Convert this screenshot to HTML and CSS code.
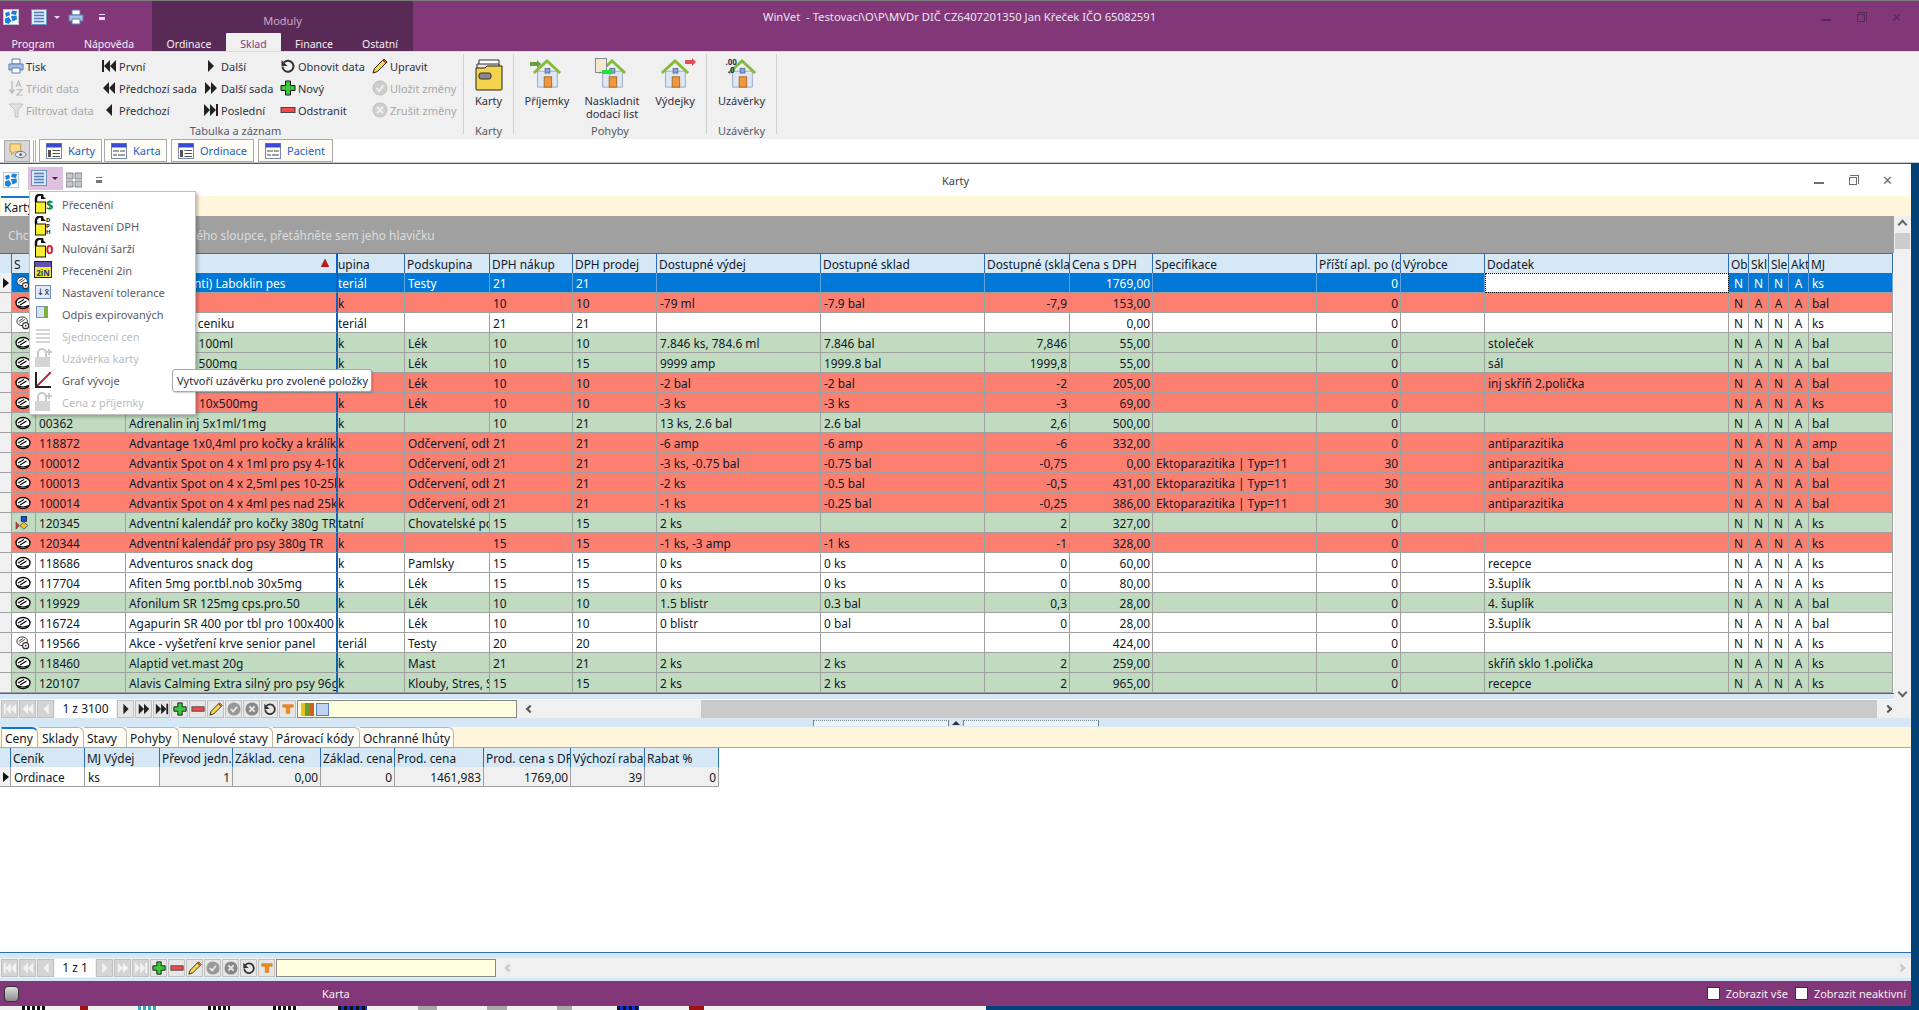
FILE: index.html
```html
<!DOCTYPE html>
<html>
<head>
    <meta charset="UTF-8">
    <title>WinVet</title>
    <link rel="stylesheet" href="styles.css">
</head>
<body>
<svg class="sprites" width="0" height="0">
    <defs>
        <symbol id="i-logo" viewBox="0 0 16 16"><rect x=".5" y=".5" width="15" height="15" fill="#fff" stroke="#b8c8d8"/><path d="M9 1.500l5 .5-1 4-5-1zM2 4l4-1.500 1 3.500-4 2zM8 7l5.500-.5.500 4-4.500 2zM2 9.500l4-1.500 2.500 4-3 3-3.500-1.500z" fill="#1f80d4"/></symbol>
        <symbol id="i-list" viewBox="0 0 16 16"><rect x=".5" y=".5" width="15" height="15" fill="#dfeaf8" stroke="#6f93c4"/><path d="M3 3.500h10M3 6.500h10M3 9.500h10M3 12.500h10" stroke="#4f7fc0" stroke-width="1.600"/></symbol>
        <symbol id="i-cards" viewBox="0 0 16 16"><path d="M0 1h7v6H0zM9 1h7v6H9zM0 9h7v6H0zM9 9h7v6H9z" fill="#c4c8cc" stroke="#707070" stroke-width=".8"/></symbol>
        <symbol id="i-print" viewBox="0 0 16 16"><path d="M4 1h8v5H4z" fill="#fff" stroke="#5a7fb0"/><path d="M1 6h14v6H1z" fill="#a8c0e4" stroke="#5a7fb0"/><path d="M4 10h8v5H4z" fill="#fff" stroke="#5a7fb0"/></symbol>
        <symbol id="i-sort" viewBox="0 0 16 16"><path d="M4 1v11M1.500 9.500L4 13l2.500-3.500" fill="none" stroke="#bcbcbc" stroke-width="1.400"/><path d="M8 7l2.500-6L13 7M9 5h3M8.500 9.500H14L9 15h5.500" fill="none" stroke="#bcbcbc" stroke-width="1.200"/></symbol>
        <symbol id="i-filter" viewBox="0 0 16 16"><path d="M1 2h14L10 8v7H7V8z" fill="#e2e2e2" stroke="#c0c0c0"/></symbol>
        <symbol id="i-first" viewBox="0 0 16 16"><path fill="currentColor" d="M1 2h2v12H1zM9 2v12L3 8zM15 2v12L9 8z"/></symbol>
        <symbol id="i-prevset" viewBox="0 0 16 16"><path fill="currentColor" d="M8 2v12L2 8zM14 2v12L8 8z"/></symbol>
        <symbol id="i-prev" viewBox="0 0 16 16"><path fill="currentColor" d="M11 2v12L5 8z"/></symbol>
        <symbol id="i-next" viewBox="0 0 16 16"><path fill="currentColor" d="M5 2v12l6-6z"/></symbol>
        <symbol id="i-nextset" viewBox="0 0 16 16"><path fill="currentColor" d="M2 2v12l6-6zM8 2v12l6-6z"/></symbol>
        <symbol id="i-last" viewBox="0 0 16 16"><path fill="currentColor" d="M1 2v12l6-6zM7 2v12l6-6zM13 2h2v12h-2z"/></symbol>
        <symbol id="i-refresh" viewBox="0 0 16 16"><path d="M4 4.500a5.500 5.500 0 1 1-1.500 4" fill="none" stroke="#333" stroke-width="2"/><path d="M1.500 2v6h6z" fill="#333"/></symbol>
        <symbol id="i-plus" viewBox="0 0 16 16"><path d="M5.500 1h5v4.500H15v5h-4.500V15h-5v-4.500H1v-5h4.500z" fill="#3cc83c" stroke="#111"/></symbol>
        <symbol id="i-minus" viewBox="0 0 16 16"><rect x="1" y="5.500" width="14" height="5" fill="#f4484c" stroke="#444"/></symbol>
        <symbol id="i-pencil" viewBox="0 0 16 16"><path d="M12 1l3 3-9.500 9.500L1 15l1.500-4.500z" fill="#f6d850" stroke="#222"/><path d="M11 2l3 3" stroke="#c03020" stroke-width="1.400"/></symbol>
        <symbol id="i-ok" viewBox="0 0 16 16"><circle cx="8" cy="8" r="7" fill="#cfcfcf" stroke="#bcbcbc"/><path d="M4.500 8l2.500 3 4.500-5.500" fill="none" stroke="#f0f0f0" stroke-width="1.800"/></symbol>
        <symbol id="i-no" viewBox="0 0 16 16"><circle cx="8" cy="8" r="7" fill="#cfcfcf" stroke="#bcbcbc"/><path d="M5 5l6 6M11 5l-6 6" stroke="#f0f0f0" stroke-width="2"/></symbol>
        <symbol id="i-ok2" viewBox="0 0 16 16"><circle cx="8" cy="8" r="7.500" fill="#989898"/><path d="M4.500 8l2.500 3 4.500-5.500" fill="none" stroke="#e8e8e8" stroke-width="2"/></symbol>
        <symbol id="i-no2" viewBox="0 0 16 16"><circle cx="8" cy="8" r="7.500" fill="#888"/><path d="M5 5l6 6M11 5l-6 6" stroke="#e8e8e8" stroke-width="2.200"/></symbol>
        <symbol id="i-funnel" viewBox="0 0 16 16"><path d="M2 3h12v3H10v7H6V6H2z" fill="#f08a1c" stroke="#c86a10" stroke-width=".6"/></symbol>
        <symbol id="i-folder" viewBox="0 0 28 32"><path d="M4 1h20v8H4z" fill="#fff" stroke="#333"/><path d="M2 5h22v5H2z" fill="#e8e8e8" stroke="#333"/><path d="M1 9h9l2-2h15v23a1 1 0 0 1-1 1H2a1 1 0 0 1-1-1z" fill="#f4d44e" stroke="#222"/><rect x="4" y="14" width="12" height="6" rx="2" fill="#8a8a8a" stroke="#333"/></symbol>
        <symbol id="i-house" viewBox="0 0 32 32"><path d="M6 13h21v17H6z" fill="#e0e7f4" stroke="#9aa8c8"/><path d="M2 15L16 2l14 13" fill="none" stroke="#86b83c" stroke-width="3"/><rect x="13" y="19" width="8" height="11" fill="#ee9a3c" stroke="#a8682a"/><rect x="14" y="10" width="5" height="5" fill="#8aa4d4" stroke="#5a70a0"/></symbol>
        <symbol id="i-pill" viewBox="0 0 16 14"><ellipse cx="8" cy="7" rx="7" ry="5.500" fill="#fff" stroke="#000" stroke-width="1.300"/><path d="M3 7l6-3.500M5 9l6.500-4M2.500 9.500q5.500 3 11 0" fill="none" stroke="#000" stroke-width="1.100"/></symbol>
        <symbol id="i-mat" viewBox="0 0 16 16"><ellipse cx="7" cy="6" rx="6" ry="5" fill="#fff" stroke="#222"/><path d="M3 6l5-3M4 8l6-4" stroke="#333"/><circle cx="11" cy="11" r="3.500" fill="#fff" stroke="#333" stroke-width="1.300"/><circle cx="11" cy="11" r="1" fill="#333"/></symbol>
        <symbol id="i-task" viewBox="0 0 16 16"><rect x="6" y="0" width="6" height="6" fill="#1f4fd8" stroke="#123"/><path d="M9 7l4.500 4L9 15l-4.500-4z" fill="#e8c820" stroke="#555"/><path d="M0 7v8l4-4z" fill="#e03030" stroke="#333" stroke-width=".6"/></symbol>
        <symbol id="i-lock" viewBox="0 0 20 20"><path d="M3 8V4a4 4 0 0 1 7-2" fill="none" stroke="#111" stroke-width="2.400"/><path d="M8 0v5h5z" fill="#111"/><rect x="2.500" y="8" width="10" height="11" fill="#f8ee30" stroke="#111"/></symbol>
        <symbol id="i-lockg" viewBox="0 0 20 20"><path d="M5 9V5a4 4 0 0 1 8 0v4" fill="none" stroke="#c8c8c8" stroke-width="2"/><rect x="2" y="9" width="15" height="10" fill="#d4d4d4"/><path d="M16 1v6M13 4h6" stroke="#c8c8c8" stroke-width="2"/></symbol>
        <symbol id="i-note" viewBox="0 0 20 18"><path d="M1 1h12v9H6l-3 3v-3H1z" fill="#fbd98a" stroke="#c09040"/><ellipse cx="13" cy="13" rx="6" ry="3.500" fill="#dfe6f0" stroke="#5a6a80"/><circle cx="13" cy="13" r="1.500" fill="#4a5a70"/></symbol>
        <symbol id="i-win" viewBox="0 0 16 16"><rect x=".5" y=".5" width="15" height="15" fill="#fff" stroke="#7a8aa8"/><rect x=".5" y=".5" width="15" height="4" fill="#3a4ad8"/><path d="M2 7h3v7H2zM6.500 7H14v1H6.500zM6.500 10H14v1H6.500zM6.500 13H14v1H6.500z" fill="#555"/></symbol>
        <symbol id="i-form" viewBox="0 0 16 16"><rect x=".5" y=".5" width="15" height="15" fill="#fff" stroke="#7a8aa8"/><rect x=".5" y=".5" width="15" height="4" fill="#3a4ad8"/><path d="M2 7h6v2H2zM9 7h5v2H9zM2 11h4v2H2zM7 11h7v2H7z" fill="#a0a0a0"/></symbol>
    </defs>
</svg>

<div class="appbar">
    <div class="appbar-left">
        <div class="qat">
            <svg class="ico logo"><use href="#i-logo"/></svg>
            <svg class="ico list"><use href="#i-list"/></svg>
            <span class="caret"></span>
            <svg class="ico print"><use href="#i-print"/></svg>
            <span class="more"></span>
        </div>
        <div class="rtabs">
            <span class="rtab w66">Program</span>
            <span class="rtab w86">Nápověda</span>
        </div>
    </div>
    <div class="moduly">
        <div class="moduly-name">Moduly</div>
        <div class="rtabs">
            <span class="rtab w74">Ordinace</span>
            <span class="rtab w55 active">Sklad</span>
            <span class="rtab w66">Finance</span>
            <span class="rtab w66">Ostatní</span>
        </div>
    </div>
    <div class="apptitle">
        <span>WinVet&nbsp; - Testovací\O\P\MVDr DIČ CZ6407201350 Jan Křeček IČO 65082591</span>
        <div class="winbtns">
            <span class="btn-min"></span>
            <span class="btn-max"></span>
            <span class="btn-close">✕</span>
        </div>
    </div>
</div>

<div class="ribbon">
    <div class="rgroup g-table">
        <div class="rgrid">
            <div class="ritem"><svg class="ico"><use href="#i-print"/></svg>Tisk</div>
            <div class="ritem"><svg class="ico"><use href="#i-first"/></svg>První</div>
            <div class="ritem"><svg class="ico"><use href="#i-next"/></svg>Další</div>
            <div class="ritem"><svg class="ico"><use href="#i-refresh"/></svg>Obnovit data</div>
            <div class="ritem"><svg class="ico"><use href="#i-pencil"/></svg>Upravit</div>
            <div class="ritem off"><svg class="ico"><use href="#i-sort"/></svg>Třídit data</div>
            <div class="ritem"><svg class="ico"><use href="#i-prevset"/></svg>Předchozí sada</div>
            <div class="ritem"><svg class="ico"><use href="#i-nextset"/></svg>Další sada</div>
            <div class="ritem"><svg class="ico"><use href="#i-plus"/></svg>Nový</div>
            <div class="ritem off"><svg class="ico"><use href="#i-ok"/></svg>Uložit změny</div>
            <div class="ritem off"><svg class="ico"><use href="#i-filter"/></svg>Filtrovat data</div>
            <div class="ritem"><svg class="ico"><use href="#i-prev"/></svg>Předchozí</div>
            <div class="ritem"><svg class="ico"><use href="#i-last"/></svg>Poslední</div>
            <div class="ritem"><svg class="ico"><use href="#i-minus"/></svg>Odstranit</div>
            <div class="ritem off"><svg class="ico"><use href="#i-no"/></svg>Zrušit změny</div>
        </div>
        <div class="rlabel">Tabulka a záznam</div>
    </div>
    <span class="rsep"></span>
    <div class="rgroup g-karty">
        <div class="rbig-row">
            <div class="rbig w100"><svg class="big folder"><use href="#i-folder"/></svg>Karty</div>
        </div>
        <div class="rlabel">Karty</div>
    </div>
    <span class="rsep"></span>
    <div class="rgroup g-pohyby">
        <div class="rbig-row">
            <div class="rbig w66"><span class="bigwrap"><svg class="big"><use href="#i-house"/></svg><i class="arrow green left"></i></span>Příjemky</div>
            <div class="rbig w64"><span class="bigwrap"><svg class="big"><use href="#i-house"/></svg><i class="doc"></i><i class="arrow lime left"></i></span>Naskladnit<br>dodací list</div>
            <div class="rbig w62"><span class="bigwrap"><svg class="big"><use href="#i-house"/></svg><i class="arrow red right"></i></span>Výdejky</div>
        </div>
        <div class="rlabel">Pohyby</div>
    </div>
    <span class="rsep"></span>
    <div class="rgroup g-uzav">
        <div class="rbig-row">
            <div class="rbig w100"><span class="bigwrap"><svg class="big"><use href="#i-house"/></svg><i class="zeros">.00<br>.0</i></span>Uzávěrky</div>
        </div>
        <div class="rlabel">Uzávěrky</div>
    </div>
    <span class="rsep"></span>
</div>

<div class="mdibar">
    <span class="mdi-note"><svg class="noteico"><use href="#i-note"/></svg></span>
    <span class="mdi-grip"></span>
    <span class="mdi w63"><svg class="ico"><use href="#i-win"/></svg>Karty</span>
    <span class="mdi w63b"><svg class="ico"><use href="#i-form"/></svg>Karta</span>
    <span class="mdi w83"><svg class="ico"><use href="#i-win"/></svg>Ordinace</span>
    <span class="mdi w75"><svg class="ico"><use href="#i-form"/></svg>Pacient</span>
</div>

<div class="window">
    <div class="winhead">
        <svg class="ico logo2"><use href="#i-logo"/></svg>
        <span class="hl"><svg class="ico"><use href="#i-list"/></svg><span class="caret dark"></span></span>
        <svg class="ico cards"><use href="#i-cards"/></svg>
        <span class="more dark"></span>
        <span class="wintitle">Karty</span>
        <div class="winbtns gray">
            <span class="btn-min"></span>
            <span class="btn-max"></span>
            <span class="btn-close">✕</span>
        </div>
    </div>
    <div class="yellow"><span class="ytab">Karty</span></div>

    <div class="gridwrap">
        <div class="gridcol">
            <div class="grouppanel">Chcete-li seskupovat podle některého sloupce, přetáhněte sem jeho hlavičku</div>
            <table class="grid main">
                <colgroup>
                    <col style="width:12px"><col style="width:24px"><col style="width:90px"><col style="width:212px"><col style="width:67px"><col style="width:85px"><col style="width:83px"><col style="width:84px"><col style="width:164px"><col style="width:164px"><col style="width:85px"><col style="width:83px"><col style="width:164px"><col style="width:84px"><col style="width:84px"><col style="width:244px"><col style="width:20px"><col style="width:20px"><col style="width:20px"><col style="width:20px"><col style="width:84px">
                </colgroup>
                <thead>
                <tr><th></th><th>S</th><th>Kód</th><th>Název<svg class="sortmark" viewBox="0 0 8 8"><path d="M4 0l4 8H0z" fill="#e01010" stroke="#333" stroke-width=".5"/></svg></th><th>upina</th><th>Podskupina</th><th>DPH nákup</th><th>DPH prodej</th><th>Dostupné výdej</th><th>Dostupné sklad</th><th>Dostupné (sklad)</th><th>Cena s DPH</th><th>Specifikace</th><th>Příští apl. po (dnech)</th><th>Výrobce</th><th>Dodatek</th><th>Ob</th><th>Skl</th><th>Sle</th><th>Akt</th><th>MJ</th></tr>
                </thead>
                <tbody>
                <tr class="sel"><td><i class="rowmark"></i></td><td><svg class="cellico"><use href="#i-mat"/></svg></td><td>110000</td><td>Vyšetření (anti) Laboklin pes</td><td>teriál</td><td>Testy</td><td>21</td><td>21</td><td></td><td></td><td></td><td>1769,00</td><td></td><td>0</td><td></td><td class="editing"></td><td>N</td><td>N</td><td>N</td><td>A</td><td>ks</td></tr>
                <tr class="red"><td></td><td><svg class="cellico"><use href="#i-pill"/></svg></td><td>100001</td><td>Acepromaz.</td><td>k</td><td></td><td>10</td><td>10</td><td>-79 ml</td><td>-7.9 bal</td><td>-7,9</td><td>153,00</td><td></td><td>0</td><td></td><td></td><td>N</td><td>A</td><td>A</td><td>A</td><td>bal</td></tr>
                <tr class="white"><td></td><td><svg class="cellico"><use href="#i-mat"/></svg></td><td>100002</td><td>Položka bez ceniku</td><td>teriál</td><td></td><td>21</td><td>21</td><td></td><td></td><td></td><td>0,00</td><td></td><td>0</td><td></td><td></td><td>N</td><td>N</td><td>N</td><td>A</td><td>ks</td></tr>
                <tr class="green"><td></td><td><svg class="cellico"><use href="#i-pill"/></svg></td><td>100003</td><td>Acidum asc. 100ml</td><td>k</td><td>Lék</td><td>10</td><td>10</td><td>7.846 ks, 784.6 ml</td><td>7.846 bal</td><td>7,846</td><td>55,00</td><td></td><td>0</td><td></td><td>stoleček</td><td>N</td><td>A</td><td>N</td><td>A</td><td>bal</td></tr>
                <tr class="green"><td></td><td><svg class="cellico"><use href="#i-pill"/></svg></td><td>100004</td><td>Acidum asc. 500mg</td><td>k</td><td>Lék</td><td>10</td><td>15</td><td>9999 amp</td><td>1999.8 bal</td><td>1999,8</td><td>55,00</td><td></td><td>0</td><td></td><td>sál</td><td>N</td><td>A</td><td>N</td><td>A</td><td>bal</td></tr>
                <tr class="red"><td></td><td><svg class="cellico"><use href="#i-pill"/></svg></td><td>100005</td><td>Aciclovir inj.</td><td>k</td><td>Lék</td><td>10</td><td>10</td><td>-2 bal</td><td>-2 bal</td><td>-2</td><td>205,00</td><td></td><td>0</td><td></td><td>inj skříň 2.polička</td><td>N</td><td>A</td><td>N</td><td>A</td><td>bal</td></tr>
                <tr class="red"><td></td><td><svg class="cellico"><use href="#i-pill"/></svg></td><td>100006</td><td>Acyclovir tbl 10x500mg</td><td>k</td><td>Lék</td><td>10</td><td>10</td><td>-3 ks</td><td>-3 ks</td><td>-3</td><td>69,00</td><td></td><td>0</td><td></td><td></td><td>N</td><td>A</td><td>N</td><td>A</td><td>ks</td></tr>
                <tr class="green"><td></td><td><svg class="cellico"><use href="#i-pill"/></svg></td><td>00362</td><td>Adrenalin inj 5x1ml/1mg</td><td>k</td><td></td><td>10</td><td>21</td><td>13 ks, 2.6 bal</td><td>2.6 bal</td><td>2,6</td><td>500,00</td><td></td><td>0</td><td></td><td></td><td>N</td><td>A</td><td>N</td><td>A</td><td>bal</td></tr>
                <tr class="red"><td></td><td><svg class="cellico"><use href="#i-pill"/></svg></td><td>118872</td><td>Advantage 1x0,4ml pro kočky a králíky</td><td>k</td><td>Odčervení, odblešení</td><td>21</td><td>21</td><td>-6 amp</td><td>-6 amp</td><td>-6</td><td>332,00</td><td></td><td>0</td><td></td><td>antiparazitika</td><td>N</td><td>A</td><td>N</td><td>A</td><td>amp</td></tr>
                <tr class="red"><td></td><td><svg class="cellico"><use href="#i-pill"/></svg></td><td>100012</td><td>Advantix Spot on 4 x 1ml pro psy 4-10kg</td><td>k</td><td>Odčervení, odblešení</td><td>21</td><td>21</td><td>-3 ks, -0.75 bal</td><td>-0.75 bal</td><td>-0,75</td><td>0,00</td><td>Ektoparazitika | Typ=11</td><td>30</td><td></td><td>antiparazitika</td><td>N</td><td>A</td><td>N</td><td>A</td><td>bal</td></tr>
                <tr class="red"><td></td><td><svg class="cellico"><use href="#i-pill"/></svg></td><td>100013</td><td>Advantix Spot on 4 x 2,5ml pes 10-25kg</td><td>k</td><td>Odčervení, odblešení</td><td>21</td><td>21</td><td>-2 ks</td><td>-0.5 bal</td><td>-0,5</td><td>431,00</td><td>Ektoparazitika | Typ=11</td><td>30</td><td></td><td>antiparazitika</td><td>N</td><td>A</td><td>N</td><td>A</td><td>bal</td></tr>
                <tr class="red"><td></td><td><svg class="cellico"><use href="#i-pill"/></svg></td><td>100014</td><td>Advantix Spot on 4 x 4ml pes nad 25kg</td><td>k</td><td>Odčervení, odblešení</td><td>21</td><td>21</td><td>-1 ks</td><td>-0.25 bal</td><td>-0,25</td><td>386,00</td><td>Ektoparazitika | Typ=11</td><td>30</td><td></td><td>antiparazitika</td><td>N</td><td>A</td><td>N</td><td>A</td><td>bal</td></tr>
                <tr class="green"><td></td><td><svg class="cellico"><use href="#i-task"/></svg></td><td>120345</td><td>Adventní kalendář pro kočky 380g TR</td><td>tatní</td><td>Chovatelské potřeby</td><td>15</td><td>15</td><td>2 ks</td><td></td><td>2</td><td>327,00</td><td></td><td>0</td><td></td><td></td><td>N</td><td>N</td><td>N</td><td>A</td><td>ks</td></tr>
                <tr class="red"><td></td><td><svg class="cellico"><use href="#i-pill"/></svg></td><td>120344</td><td>Adventní kalendář pro psy 380g TR</td><td>k</td><td></td><td>15</td><td>15</td><td>-1 ks, -3 amp</td><td>-1 ks</td><td>-1</td><td>328,00</td><td></td><td>0</td><td></td><td></td><td>N</td><td>A</td><td>N</td><td>A</td><td>ks</td></tr>
                <tr class="white"><td></td><td><svg class="cellico"><use href="#i-pill"/></svg></td><td>118686</td><td>Adventuros snack dog</td><td>k</td><td>Pamlsky</td><td>15</td><td>15</td><td>0 ks</td><td>0 ks</td><td>0</td><td>60,00</td><td></td><td>0</td><td></td><td>recepce</td><td>N</td><td>A</td><td>N</td><td>A</td><td>ks</td></tr>
                <tr class="white"><td></td><td><svg class="cellico"><use href="#i-pill"/></svg></td><td>117704</td><td>Afiten 5mg por.tbl.nob 30x5mg</td><td>k</td><td>Lék</td><td>15</td><td>15</td><td>0 ks</td><td>0 ks</td><td>0</td><td>80,00</td><td></td><td>0</td><td></td><td>3.šuplík</td><td>N</td><td>A</td><td>N</td><td>A</td><td>ks</td></tr>
                <tr class="green"><td></td><td><svg class="cellico"><use href="#i-pill"/></svg></td><td>119929</td><td>Afonilum SR 125mg cps.pro.50</td><td>k</td><td>Lék</td><td>10</td><td>10</td><td>1.5 blistr</td><td>0.3 bal</td><td>0,3</td><td>28,00</td><td></td><td>0</td><td></td><td>4. šuplík</td><td>N</td><td>A</td><td>N</td><td>A</td><td>bal</td></tr>
                <tr class="white"><td></td><td><svg class="cellico"><use href="#i-pill"/></svg></td><td>116724</td><td>Agapurin SR 400 por tbl pro 100x400</td><td>k</td><td>Lék</td><td>10</td><td>10</td><td>0 blistr</td><td>0 bal</td><td>0</td><td>28,00</td><td></td><td>0</td><td></td><td>3.šuplík</td><td>N</td><td>A</td><td>N</td><td>A</td><td>bal</td></tr>
                <tr class="white"><td></td><td><svg class="cellico"><use href="#i-mat"/></svg></td><td>119566</td><td>Akce - vyšetření krve senior panel</td><td>teriál</td><td>Testy</td><td>20</td><td>20</td><td></td><td></td><td></td><td>424,00</td><td></td><td>0</td><td></td><td></td><td>N</td><td>N</td><td>N</td><td>A</td><td>ks</td></tr>
                <tr class="green"><td></td><td><svg class="cellico"><use href="#i-pill"/></svg></td><td>118460</td><td>Alaptid vet.mast 20g</td><td>k</td><td>Mast</td><td>21</td><td>21</td><td>2 ks</td><td>2 ks</td><td>2</td><td>259,00</td><td></td><td>0</td><td></td><td>skříň sklo 1.polička</td><td>N</td><td>A</td><td>N</td><td>A</td><td>ks</td></tr>
                <tr class="green"><td></td><td><svg class="cellico"><use href="#i-pill"/></svg></td><td>120107</td><td>Alavis Calming Extra silný pro psy 96g</td><td>k</td><td>Klouby, Stres, Srdce</td><td>15</td><td>15</td><td>2 ks</td><td>2 ks</td><td>2</td><td>965,00</td><td></td><td>0</td><td></td><td>recepce</td><td>N</td><td>A</td><td>N</td><td>A</td><td>ks</td></tr>
                </tbody>
            </table>
            <div class="blueband"></div>
        </div>
        <div class="vscroll">
            <span class="chev up"></span>
            <span class="vthumb"></span>
            <span class="chev down"></span>
        </div>
    </div>

    <div class="navrow">
        <span class="nb off"><svg class="ico"><use href="#i-first"/></svg></span>
        <span class="nb off"><svg class="ico"><use href="#i-prevset"/></svg></span>
        <span class="nb off"><svg class="ico"><use href="#i-prev"/></svg></span>
        <span class="navlabel w61">1 z 3100</span>
        <span class="nb"><svg class="ico"><use href="#i-next"/></svg></span>
        <span class="nb"><svg class="ico"><use href="#i-nextset"/></svg></span>
        <span class="nb"><svg class="ico"><use href="#i-last"/></svg></span>
        <span class="nb"><svg class="ico"><use href="#i-plus"/></svg></span>
        <span class="nb"><svg class="ico"><use href="#i-minus"/></svg></span>
        <span class="nb"><svg class="ico"><use href="#i-pencil"/></svg></span>
        <span class="nb"><svg class="ico"><use href="#i-ok2"/></svg></span>
        <span class="nb"><svg class="ico"><use href="#i-no2"/></svg></span>
        <span class="nb"><svg class="ico"><use href="#i-refresh"/></svg></span>
        <span class="nb"><svg class="ico"><use href="#i-funnel"/></svg></span>
        <span class="filterbox w220"><i class="fb-chart"></i><i class="fb-table"></i></span>
        <span class="hchev left"></span>
        <span class="hthumb"></span>
        <span class="hchev right"></span>
    </div>

    <div class="splitter">
        <span class="dots"></span><span class="splitcaret"></span><span class="dots"></span>
    </div>

    <div class="subtabs">
        <span class="subtab active w36">Ceny</span>
        <span class="subtab w45">Sklady</span>
        <span class="subtab w43">Stavy</span>
        <span class="subtab w51">Pohyby</span>
        <span class="subtab w94">Nenulové stavy</span>
        <span class="subtab w87">Párovací kódy</span>
        <span class="subtab w94">Ochranné lhůty</span>
    </div>

    <div class="detail">
        <table class="grid sub">
            <colgroup>
                <col style="width:11px"><col style="width:74px"><col style="width:75px"><col style="width:73px"><col style="width:88px"><col style="width:74px"><col style="width:89px"><col style="width:87px"><col style="width:74px"><col style="width:74px">
            </colgroup>
            <thead>
            <tr><th></th><th>Ceník</th><th>MJ Výdej</th><th>Převod jedn.</th><th>Základ. cena</th><th>Základ. cena</th><th>Prod. cena</th><th>Prod. cena s DPH</th><th>Výchozí rabat</th><th>Rabat %</th></tr>
            </thead>
            <tbody>
            <tr><td><i class="rowmark"></i></td><td>Ordinace</td><td>ks</td><td>1</td><td>0,00</td><td>0</td><td>1461,983</td><td>1769,00</td><td>39</td><td>0</td></tr>
            </tbody>
        </table>
    </div>

    <div class="blueband2"></div>
    <div class="navrow second">
        <span class="nb off"><svg class="ico"><use href="#i-first"/></svg></span>
        <span class="nb off"><svg class="ico"><use href="#i-prevset"/></svg></span>
        <span class="nb off"><svg class="ico"><use href="#i-prev"/></svg></span>
        <span class="navlabel w40">1 z 1</span>
        <span class="nb off"><svg class="ico"><use href="#i-next"/></svg></span>
        <span class="nb off"><svg class="ico"><use href="#i-nextset"/></svg></span>
        <span class="nb off"><svg class="ico"><use href="#i-last"/></svg></span>
        <span class="nb"><svg class="ico"><use href="#i-plus"/></svg></span>
        <span class="nb"><svg class="ico"><use href="#i-minus"/></svg></span>
        <span class="nb"><svg class="ico"><use href="#i-pencil"/></svg></span>
        <span class="nb"><svg class="ico"><use href="#i-ok2"/></svg></span>
        <span class="nb"><svg class="ico"><use href="#i-no2"/></svg></span>
        <span class="nb"><svg class="ico"><use href="#i-refresh"/></svg></span>
        <span class="nb"><svg class="ico"><use href="#i-funnel"/></svg></span>
        <span class="filterbox w220"></span>
        <span class="hchev left faint"></span>
        <span class="hspace"></span>
        <span class="hchev right faint"></span>
    </div>
    <div class="blueband3"></div>

    <div class="statusbar">
        <span class="status-btn"></span>
        <span class="status-title">Karta</span>
        <label class="cb"><i></i>Zobrazit vše</label>
        <label class="cb"><i></i>Zobrazit neaktivní</label>
    </div>

    <div class="menu">
        <div class="mi"><span class="mi-ico"><svg><use href="#i-lock"/></svg><b class="tag green-t">$</b></span>Přecenění</div>
        <div class="mi"><span class="mi-ico"><svg><use href="#i-lock"/></svg><b class="tag dph">D<br>P<br>H</b></span>Nastavení DPH</div>
        <div class="mi"><span class="mi-ico"><svg><use href="#i-lock"/></svg><b class="tag red-t">0</b></span>Nulování šarží</div>
        <div class="mi"><span class="mi-ico"><i class="mi-2in">2iN</i></span>Přecenění 2in</div>
        <div class="mi"><span class="mi-ico"><i class="mi-tol">↓x̄</i></span>Nastavení tolerance</div>
        <div class="mi"><span class="mi-ico"><i class="mi-exp"></i></span>Odpis expirovaných</div>
        <div class="mi off"><span class="mi-ico"><i class="mi-merge"></i></span>Sjednocení cen</div>
        <div class="mi off"><span class="mi-ico"><svg><use href="#i-lockg"/></svg></span>Uzávěrka karty</div>
        <div class="mi"><span class="mi-ico"><i class="mi-chart"></i></span>Graf vývoje</div>
        <div class="mi off"><span class="mi-ico"><svg><use href="#i-lockg"/></svg></span>Cena z příjemky</div>
    </div>
    <div class="tooltip">Vytvoří uzávěrku pro zvolené položky</div>
</div>

<div class="deskstrip">
    <i style="width:23px;margin-left:22px"></i><i class="rd" style="width:8px;margin-left:35px"></i><i class="cy" style="width:20px;margin-left:50px"></i><i style="width:22px;margin-left:50px"></i><i style="width:24px;margin-left:43px"></i><i class="bl" style="width:29px;margin-left:41px"></i><i class="gy" style="width:19px;margin-left:51px"></i><i class="gy" style="width:20px;margin-left:50px"></i><i class="gy" style="width:15px;margin-left:50px"></i><i class="bl" style="width:22px;margin-left:45px"></i><i class="rd" style="width:15px;margin-left:50px"></i>
</div>
</body>
</html>
```

FILE: styles.css
```css
* {
    margin: 0;
    padding: 0;
    box-sizing: border-box;
}

html, body {
    width: 1919px;
    height: 1010px;
    overflow: hidden;
}

body {
    position: relative;
    background-color: #024276;
    font-family: "Noto Sans", "DejaVu Sans", sans-serif;
    font-size: 12px;
    color: #101828;
}

.sprites {
    position: absolute;
}

.ico {
    display: block;
    width: 16px;
    height: 16px;
    flex: none;
}

/* horni lista */
.appbar {
    display: flex;
    height: 51px;
    border-top: 1px solid #7c7c7c;
    background-color: #823878;
    color: #fff;
}

.appbar-left {
    display: flex;
    flex-direction: column;
    width: 152px;
}

.qat {
    display: flex;
    align-items: center;
    height: 32px;
    padding-left: 3px;
}

.qat .list {
    margin-left: 12px;
}

.qat .print {
    margin-left: 8px;
}

.caret {
    width: 0;
    height: 0;
    margin-left: 7px;
    border-top: 3px solid #e8e0f0;
    border-left: 3px solid transparent;
    border-right: 3px solid transparent;
}

.caret.dark {
    margin-left: 5px;
    border-top-color: #333;
}

.more {
    width: 6px;
    height: 6px;
    margin-left: 15px;
    border-top: 1px solid #e8e0f0;
    border-bottom: 3px solid #e8e0f0;
}

.more.dark {
    margin-left: 14px;
    border-color: #777;
}

.rtabs {
    display: flex;
    height: 18px;
}

.rtab {
    font-size: 10.500px;
    line-height: 23px;
    text-align: center;
    color: #f4eef4;
}

.rtab.active {
    background-color: #f0f0f0;
    color: #823878;
    border-radius: 1px 1px 0 0;
}

.w55 { width: 55px; }
.w66 { width: 66px; }
.w74 { width: 74px; }
.w86 { width: 86px; }

.moduly {
    display: flex;
    flex-direction: column;
    width: 261px;
    background-color: #5a2a56;
}

.moduly-name {
    height: 32px;
    padding-top: 11px;
    font-size: 11px;
    text-align: center;
    line-height: 18px;
    color: #c8a8cc;
}

.apptitle {
    display: flex;
    flex: 1;
    padding: 7px 0 0 350px;
    color: #ece4f0;
    font-size: 11.250px;
    line-height: 18px;
}

.winbtns {
    display: flex;
    align-items: center;
    height: 18px;
    margin-left: auto;
    margin-right: 17px;
    color: #5a2a56;
}

.btn-min {
    width: 10px;
    height: 2px;
    margin-top: 5px;
    background-color: currentColor;
}

.btn-max {
    position: relative;
    width: 8px;
    height: 8px;
    margin: 2px 0 0 26px;
    border: 1px solid currentColor;
}

.btn-max::before {
    content: "";
    position: absolute;
    top: -3px;
    right: -3px;
    width: 8px;
    height: 8px;
    border-top: 1px solid currentColor;
    border-right: 1px solid currentColor;
}

.btn-close {
    margin-left: 26px;
    font-size: 13px;
    font-weight: bold;
    line-height: 14px;
}

/* ribbon */
.ribbon {
    display: flex;
    height: 88px;
    border-top: 1px solid #e0d8e0;
    background-color: #f0f0f0;
    color: #303040;
    font-size: 11px;
}

.rgroup {
    display: flex;
    flex-direction: column;
    flex: none;
}

.g-table { width: 463px; padding: 3px 0 0 8px; }
.g-karty { width: 49px; }
.g-pohyby { width: 192px; }
.g-uzav { width: 69px; }

.rgrid {
    display: grid;
    grid-template-columns: 93px 102px 77px 92px 86px;
    grid-auto-rows: 22px;
    height: 67px;
}

.ritem {
    display: flex;
    align-items: center;
    gap: 2px;
    white-space: nowrap;
}

.ritem .ico {
    color: #222;
}

.ritem.off {
    color: #a8a8a8;
}

.rlabel {
    height: 17px;
    text-align: center;
    line-height: 18px;
    color: #5a5a66;
}

.rsep {
    flex: none;
    width: 1px;
    height: 80px;
    margin-top: 2px;
    background-color: #d0d0d0;
}

.rbig-row {
    display: flex;
    height: 70px;
    padding-top: 7px;
}

.rbig {
    display: flex;
    flex-direction: column;
    align-items: center;
    text-align: center;
    line-height: 13px;
}

.w100 { width: 100%; }
.w62 { width: 62px; }
.w64 { width: 64px; }

.big {
    display: block;
    width: 30px;
    height: 30px;
    margin-bottom: 5px;
}

.big.folder {
    width: 28px;
    height: 32px;
    margin: 0 0 3px;
}

.bigwrap {
    position: relative;
    display: block;
}

.arrow {
    position: absolute;
    top: 3px;
    width: 7px;
    height: 4px;
}

.arrow::after {
    content: "";
    position: absolute;
    top: -2px;
    right: -4px;
    border-left: 4px solid currentColor;
    border-top: 4px solid transparent;
    border-bottom: 4px solid transparent;
}

.arrow.green { background-color: #6c9c3c; color: #6c9c3c; left: -2px; }
.arrow.lime { background-color: #20e040; color: #20e040; left: 5px; top: 11px; }
.arrow.red { background-color: #e05050; color: #e05050; right: -2px; top: 1px; }

.doc {
    position: absolute;
    left: -2px;
    top: -1px;
    width: 12px;
    height: 15px;
    border: 1px solid #889;
    background-color: #f4e8d0;
}

.zeros {
    position: absolute;
    left: -1px;
    top: -1px;
    font-style: normal;
    font-weight: bold;
    font-size: 8px;
    line-height: 8px;
    color: #1a3060;
}

/* radek oken */
.mdibar {
    display: flex;
    align-items: center;
    height: 24px;
    padding-left: 4px;
    border-bottom: 1px solid #c8c8c8;
    background-color: #fff;
}

.mdi-note {
    width: 26px;
    height: 22px;
    border: 1px solid #aaa;
    background-color: #d8d8d8;
    padding: 2px 0 0 4px;
}

.noteico {
    display: block;
    width: 18px;
    height: 16px;
}

.mdi-grip {
    width: 3px;
    height: 22px;
    margin: 0 3px;
    border-left: 1px solid #b0b0b0;
    border-right: 1px solid #b0b0b0;
}

.mdi {
    display: flex;
    align-items: center;
    gap: 6px;
    height: 23px;
    margin-right: 4px;
    padding-left: 6px;
    border: 1px solid #aaa;
    background-color: #fffdf6;
    color: #2060c8;
    font-size: 11px;
}

.w63 { width: 63px; margin-right: 2px; }
.w63b { width: 63px; }
.w83 { width: 83px; }
.w75 { width: 75px; }

/* okno */
.window {
    position: relative;
    width: 1911px;
    border-top: 1px solid #823878;
    background-color: #fff;
}

.winhead {
    position: relative;
    display: flex;
    align-items: center;
    height: 32px;
    padding-left: 3px;
}

.logo2 {
    margin-right: 9px;
}

.hl {
    display: flex;
    align-items: center;
    width: 35px;
    height: 23px;
    margin-top: -4px;
    padding-left: 3px;
    background-color: #e0c0e0;
}

.cards {
    margin-left: 3px;
}

.wintitle {
    position: absolute;
    left: 942px;
    color: #444;
    font-size: 11px;
}

.winbtns.gray {
    height: 16px;
    margin-right: 18px;
    color: #6e6e6e;
}

.winbtns.gray .btn-max,
.winbtns.gray .btn-close {
    margin-left: 25px;
}

.yellow {
    height: 20px;
    background-color: #fff6dc;
}

.ytab {
    display: inline-block;
    height: 20px;
    margin-left: 1px;
    padding: 2px 2px 0 3px;
    border-top: 2px solid #0a78d8;
    border-right: 1px solid #aaa;
    background-color: #fffdf6;
    line-height: 15px;
}

.gridwrap {
    display: flex;
}

.gridcol {
    width: 1894px;
}

.grouppanel {
    height: 37px;
    padding-left: 8px;
    background-color: #a0a0a0;
    color: #dcdcdc;
    font-size: 11.900px;
    line-height: 38px;
    white-space: nowrap;
}

.grid {
    table-layout: fixed;
    border-collapse: separate;
    border-spacing: 0;
    font-size: 11.900px;
}

.grid.main {
    width: 1893px;
}

.grid.sub {
    width: 719px;
}

.grid th {
    height: 20px;
    padding: 0 2px;
    border-top: 1px solid #2f6db5;
    border-right: 1px solid #2f6db5;
    background-color: #d6e8f5;
    font-weight: normal;
    text-align: left;
    line-height: 18px;
    overflow: hidden;
    white-space: nowrap;
}

.grid td {
    height: 20px;
    padding: 1px 3px 0;
    border-top: 0;
    border-right: 1px solid #a0a0a0;
    border-bottom: 1px solid #a0a0a0;
    line-height: 18px;
    overflow: hidden;
    white-space: nowrap;
}

.grid.main td:nth-child(1) {
    padding-left: 0;
    padding-right: 0;
    background-color: #f0f0f0;
}

.grid.main td:nth-child(2) {
    padding-right: 0;
}

.grid.main th:nth-child(4),
.grid.main td:nth-child(4) {
    border-right: 2px solid #1060c0;
}

.grid.main th:nth-child(4) {
    position: relative;
}

.sortmark {
    position: absolute;
    right: 7px;
    top: 5px;
    width: 8px;
    height: 8px;
}

.grid.main td:nth-child(5) {
    padding-left: 0;
}

.grid.main th:nth-child(5) {
    padding-left: 0;
}

.grid.main td:nth-child(11),
.grid.main td:nth-child(12),
.grid.main td:nth-child(14) {
    padding-left: 0;
    padding-right: 2px;
    text-align: right;
}

.grid.main td:nth-child(n+17):nth-child(-n+20) {
    padding-left: 0;
    padding-right: 0;
    text-align: center;
}

.grid.main th:nth-child(n+17):nth-child(-n+20) {
    padding: 0 0 0 2px;
}

.cellico {
    display: block;
    width: 16px;
    height: 14px;
}

.red td { background-color: #fd7f70; }
.green td { background-color: #c0dbc0; }
.white td { background-color: #fff; }

.sel td {
    background-color: #0078d7;
    color: #fff;
    border-right-color: #6aa0d8;
}

.sel td.editing {
    background-color: #fff;
    outline: 1px dotted #000;
    outline-offset: -1px;
}

.rowmark {
    display: block;
    width: 0;
    height: 0;
    margin: 0 0 0 3px;
    border-left: 6px solid #111;
    border-top: 5px solid transparent;
    border-bottom: 5px solid transparent;
}

.blueband {
    height: 7px;
    border-top: 1px solid #2f6db5;
    border-bottom: 1px solid #fff;
    background-color: #d6e8f5;
}

.vscroll {
    display: flex;
    flex-direction: column;
    align-items: center;
    width: 17px;
    padding-top: 5px;
    background-color: #f0f0f0;
}

.chev {
    width: 7px;
    height: 7px;
    border-top: 2px solid #666;
    border-left: 2px solid #666;
    transform: rotate(45deg);
}

.chev.down {
    margin-top: auto;
    margin-bottom: 4px;
    transform: rotate(225deg);
}

.vthumb {
    width: 15px;
    height: 16px;
    margin-top: 5px;
    background-color: #cdcdcd;
}

/* navigator */
.navrow {
    display: flex;
    align-items: center;
    gap: 1px;
    height: 18px;
    padding-left: 1px;
    background-color: #f0f0f0;
}

.navrow.second {
    height: 20px;
}

.nb {
    display: flex;
    align-items: center;
    justify-content: center;
    width: 17px;
    height: 18px;
    border: 1px solid #c0c0c0;
    background-color: #e6e6e6;
    color: #222;
}

.nb .ico {
    width: 14px;
    height: 14px;
}

.nb.off {
    background-color: #d4d4d4;
    color: #f4f4f4;
}

.navlabel {
    height: 18px;
    background-color: #fff;
    text-align: center;
    line-height: 18px;
}

.w61 { width: 61px; }
.w40 { width: 40px; }

.filterbox {
    display: flex;
    align-items: center;
    gap: 2px;
    height: 18px;
    padding-left: 3px;
    border: 1px solid #888;
    background-color: #ffffe0;
}

.w220 { width: 220px; }

.fb-chart,
.fb-table {
    display: block;
    width: 13px;
    height: 13px;
}

.fb-chart {
    background: linear-gradient(90deg, #e8c020 33%, #60a030 33% 66%, #d06020 66%);
}

.fb-table {
    background-color: #c0d4f0;
    border: 1px solid #5080c8;
}

.hchev {
    flex: none;
    width: 6px;
    height: 6px;
    border-top: 2px solid #555;
    border-left: 2px solid #555;
}

.hchev.left {
    margin: 0 0 0 9px;
    transform: rotate(-45deg);
}

.hchev.right {
    transform: rotate(135deg);
}

.hchev.faint {
    border-color: #c4c4c4;
}

.hthumb {
    width: 1176px;
    height: 18px;
    margin-left: 167px;
    background-color: #cacaca;
}

.hthumb + .hchev {
    margin-left: 7px;
}

.hspace {
    flex: 1;
}

.hchev.right.faint {
    margin-right: 7px;
}

.splitter {
    display: flex;
    align-items: center;
    justify-content: center;
    gap: 3px;
    height: 9px;
    background-color: #d6e8f5;
}

.dots {
    width: 136px;
    height: 6px;
    margin-top: 1px;
    border: 1px solid #708498;
    border-bottom: 0;
    border-top-style: dotted;
    background-color: #eef4fa;
}

.splitcaret {
    width: 0;
    height: 0;
    border-bottom: 4px solid #333;
    border-left: 4px solid transparent;
    border-right: 4px solid transparent;
}

.subtabs {
    display: flex;
    align-items: flex-end;
    height: 21px;
    padding-left: 1px;
    border-bottom: 1px solid #a8a8a0;
    background-color: #fff6dc;
}

.subtab {
    height: 20px;
    padding-left: 3px;
    border: 1px solid #b8b8b0;
    border-bottom: 0;
    border-left: 0;
    border-top-right-radius: 6px;
    background-color: #fffdf6;
    line-height: 21px;
    white-space: nowrap;
}

.subtab.active {
    border-top: 2px solid #0a78d8;
    border-left: 1px solid #b8b8b0;
    line-height: 20px;
}

.w36 { width: 37px; margin-right: 1px; }
.w45 { width: 45px; }
.w43 { width: 43px; }
.w51 { width: 52px; }
.w94 { width: 94px; }
.w87 { width: 87px; }

.detail {
    height: 205px;
    border-bottom: 1px solid #2f6db5;
}

.grid.sub th {
    height: 19px;
    border-top: 0;
}

.grid.sub td:nth-child(n+4) {
    padding-left: 0;
    padding-right: 2px;
    text-align: right;
    background-color: #f0f0f0;
}

.grid.sub td:nth-child(1) {
    padding-left: 0;
    padding-right: 0;
    background-color: #f0f0f0;
}

.blueband2 {
    height: 5px;
    background-color: #d6e8f5;
}

.blueband3 {
    height: 3px;
    background-color: #d6e8f5;
}

/* stavovy radek */
.statusbar {
    display: flex;
    align-items: center;
    height: 25px;
    padding-left: 4px;
    background-color: #823878;
    color: #f4eef4;
    font-size: 11px;
}

.status-btn {
    width: 15px;
    height: 16px;
    border: 1px solid #333;
    border-radius: 4px;
    background: linear-gradient(#e0e0e0, #8a8a8a);
}

.status-title {
    margin-left: 303px;
    margin-right: auto;
}

.cb {
    display: flex;
    align-items: center;
    margin-right: 7px;
}

.cb i {
    width: 13px;
    height: 13px;
    margin-right: 6px;
    border: 1px solid #333;
    background-color: #fff;
}

.cb + .cb {
    margin-right: 5px;
}

/* menu a napoveda */
.menu {
    position: absolute;
    left: 29px;
    top: 27px;
    width: 167px;
    height: 224px;
    padding-top: 1px;
    border: 1px solid #c0c0c0;
    background-color: #fff;
    box-shadow: 2px 2px 3px rgba(0, 0, 0, .25);
}

.mi {
    display: flex;
    align-items: center;
    height: 22px;
    color: #5a5a6a;
    font-size: 11px;
    white-space: nowrap;
}

.mi.off {
    color: #bcbcbc;
}

.mi-ico {
    position: relative;
    display: block;
    flex: none;
    width: 20px;
    height: 20px;
    margin: 0 9px 0 3px;
}

.mi-ico svg {
    display: block;
    width: 20px;
    height: 20px;
}

.tag {
    position: absolute;
    left: 13px;
    top: 3px;
    font-size: 13px;
    line-height: 16px;
    font-weight: bold;
}

.green-t { color: #1a8030; }
.red-t { color: #e01010; }

.dph {
    top: 1px;
    font-size: 6px;
    line-height: 6px;
    color: #111;
}

.mi-2in {
    display: block;
    width: 18px;
    height: 17px;
    margin: 1px;
    border: 1px solid #223;
    background: linear-gradient(#6050b0 35%, #f8e820 35%);
    color: #1030a0;
    font-size: 8px;
    font-style: normal;
    font-weight: bold;
    text-align: center;
    line-height: 22px;
}

.mi-tol {
    display: block;
    width: 16px;
    height: 14px;
    margin: 3px 2px;
    border: 1px solid #7090c0;
    background-color: #e0ebf8;
    color: #223;
    font-size: 9px;
    font-style: normal;
    text-align: center;
    line-height: 12px;
}

.mi-exp {
    display: block;
    width: 12px;
    height: 12px;
    margin: 2px 3px;
    border: 1px solid #7090c0;
    border-right: 4px solid #80b040;
    background-color: #d8e4f4;
}

.mi-merge {
    display: block;
    width: 14px;
    height: 14px;
    margin: 3px;
    background: repeating-linear-gradient(#d4d4d4 0 2px, #fff 2px 4px);
}

.mi-chart {
    display: block;
    width: 16px;
    height: 16px;
    margin: 2px;
    border-left: 2px solid #222;
    border-bottom: 2px solid #222;
    background: linear-gradient(135deg, transparent 45%, #d03030 45% 55%, transparent 55%);
}

.tooltip {
    position: absolute;
    left: 172px;
    top: 205px;
    width: 200px;
    height: 23px;
    padding-left: 4px;
    border: 1px solid #a8a8a8;
    border-radius: 3px;
    background-color: #fff;
    box-shadow: 1px 1px 2px rgba(0, 0, 0, .2);
    color: #2a2a3a;
    font-size: 11px;
    line-height: 21px;
    white-space: nowrap;
}

/* spodni okraj plochy */
.deskstrip {
    display: flex;
    width: 986px;
    height: 4px;
    background-color: #f0f0f0;
}

.deskstrip i {
    display: block;
    height: 4px;
    background: repeating-linear-gradient(90deg, #111 0 3px, #fff 3px 5px);
}

.deskstrip i.rd { background: #a01010; }
.deskstrip i.cy { background: repeating-linear-gradient(90deg, #30a8b8 0 3px, #fff 3px 5px); }
.deskstrip i.bl { background: repeating-linear-gradient(90deg, #111 0 3px, #1030d0 3px 6px); }
.deskstrip i.gy { background: #a8a8a8; }
```
